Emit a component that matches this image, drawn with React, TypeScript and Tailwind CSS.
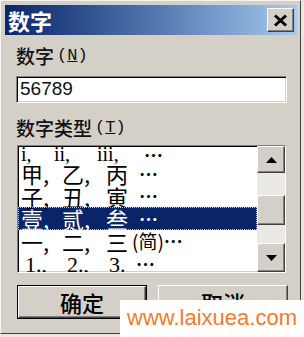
import React from "react";

const cjk = "font-['Noto_Sans_CJK_SC',sans-serif]";
const raised =
  "border border-t-white border-l-white border-r-[#404040] border-b-[#404040] shadow-[inset_-1px_-1px_0_#808080] bg-[#d4d0c8]";
const sunken =
  "border border-t-[#808080] border-l-[#808080] border-r-white border-b-white shadow-[inset_1px_1px_0_#000,inset_-1px_-1px_0_#d4d0c8] bg-white";

type Cell = { text: string; w: string; latin?: boolean };
type Row = {
  pad: string;
  height: string;
  latinClass: string;
  cells: Cell[];
  tail: string;
  selected?: boolean;
};

const fullLatin = "relative top-[2px] text-[22px] leading-[22px]";

const rows: Row[] = [
  {
    pad: "pl-[3px]",
    height: "h-[15px]",
    latinClass: "text-[20px] leading-[15px]",
    cells: [
      { text: "i,", w: "w-[33px]", latin: true },
      { text: "ii,", w: "w-[43px]", latin: true },
      { text: "iii,", w: "w-[47px]", latin: true },
    ],
    tail: "",
  },
  {
    pad: "pl-[3px]",
    height: "h-[22.5px]",
    latinClass: fullLatin,
    cells: [
      { text: "甲,", w: "w-[41px]" },
      { text: "乙,", w: "w-[44px]" },
      { text: "丙", w: "w-[33px]" },
    ],
    tail: "",
  },
  {
    pad: "pl-[3px]",
    height: "h-[22.5px]",
    latinClass: fullLatin,
    cells: [
      { text: "子,", w: "w-[41px]" },
      { text: "丑,", w: "w-[44px]" },
      { text: "寅", w: "w-[33px]" },
    ],
    tail: "",
  },
  {
    pad: "pl-[3px]",
    height: "h-[22.5px]",
    latinClass: fullLatin,
    cells: [
      { text: "壹,", w: "w-[41px]" },
      { text: "贰,", w: "w-[44px]" },
      { text: "叁", w: "w-[33px]" },
    ],
    tail: "",
    selected: true,
  },
  {
    pad: "pl-[3px]",
    height: "h-[22.5px]",
    latinClass: fullLatin,
    cells: [
      { text: "一,", w: "w-[41px]" },
      { text: "二,", w: "w-[44px]" },
      { text: "三", w: "w-[26px]" },
    ],
    tail: "(简)",
  },
  {
    pad: "pl-[7px]",
    height: "h-[22.5px]",
    latinClass: fullLatin,
    cells: [
      { text: "1.,", w: "w-[42px]", latin: true },
      { text: "2.,", w: "w-[42px]", latin: true },
      { text: "3.", w: "w-[27px]", latin: true },
    ],
    tail: "",
  },
];

function ListRow({ row }: { row: Row }) {
  return (
    <div
      className={`flex ${row.height} items-center whitespace-nowrap ${row.pad} ${
        row.selected
          ? "bg-[#0a246a] text-white outline outline-1 outline-dotted outline-offset-[-1px] outline-[#c9c38a]"
          : "text-black"
      }`}
    >
      {row.cells.map((cell) => (
        <span
          key={cell.text}
          className={`${cell.w} shrink-0 ${
            cell.latin
              ? `font-['Liberation_Serif',serif] ${row.latinClass}`
              : `${cjk} text-[22px] leading-[22px]`
          }`}
        >
          {cell.text}
        </span>
      ))}
      {row.tail ? (
        <span className={`${cjk} text-[19px] leading-[22px]`}>{row.tail}</span>
      ) : null}
      <span className={`${cjk} text-[19px] font-bold leading-[15px]`}>…</span>
    </div>
  );
}

function Arrow({ up }: { up?: boolean }) {
  return (
    <svg width="11" height="6" viewBox="0 0 11 6">
      {up ? (
        <polygon points="5.5,0 11,6 0,6" fill="#000" />
      ) : (
        <polygon points="0,0 11,0 5.5,6" fill="#000" />
      )}
    </svg>
  );
}

export default function App() {
  return (
    <div className="relative h-[337px] w-[304px] overflow-hidden bg-[#e9e7e3]">
      <div className="h-[334px] w-[301px] border-l border-t border-r border-b border-l-[#f4f3f0] border-t-[#f4f3f0] border-r-[#404040] border-b-[#404040] bg-[#d4d0c8] pl-[4px] pt-[4px]">
        <div className="flex h-[30px] w-[292px] items-center justify-between bg-gradient-to-r from-[#0a246a] to-[#a6caf0] pl-[3px] pr-[3px]">
          <span className={`${cjk} text-[22px] font-bold leading-[30px] text-white`}>
            数字
          </span>
          <button
            className={`flex h-[24px] w-[27px] items-center justify-center ${raised}`}
          >
            <svg width="15" height="13" viewBox="0 0 15 13">
              <path d="M2 1.5 L13 11.5 M13 1.5 L2 11.5" stroke="#000" strokeWidth="3" />
            </svg>
          </button>
        </div>

        <div className="pl-[11px]">
          <div className="mt-[9px] flex h-[24px] items-center leading-[24px] text-[#111]">
            <span className={`${cjk} text-[19px] font-medium`}>数字</span>
            <span className="ml-[3px] font-['Liberation_Mono',monospace] text-[17px]">
              (<span className="underline">N</span>)
            </span>
          </div>

          <div className={`mt-[8px] flex h-[27px] w-[271px] items-center pl-[3px] ${sunken}`}>
            <span className="font-['Liberation_Sans',sans-serif] text-[19px] text-[#111]">
              56789
            </span>
          </div>

          <div className="mt-[13px] flex h-[24px] items-center leading-[24px] text-[#111]">
            <span className={`${cjk} text-[19px] font-medium`}>数字类型</span>
            <span className="ml-[3px] font-['Liberation_Mono',monospace] text-[17px]">
              (<span className="underline">T</span>)
            </span>
          </div>

          <div className={`ml-[1px] mt-[5px] flex h-[128px] w-[269px] ${sunken}`}>
            <div className="flex-1 overflow-hidden pt-px">
              {rows.map((row, i) => (
                <ListRow key={i} row={row} />
              ))}
            </div>
            <div className="flex w-[28px] flex-col bg-[#ebe9e4]">
              <div className={`flex h-[27px] items-center justify-center ${raised}`}>
                <Arrow up />
              </div>
              <div className="h-[22px]" />
              <div className={`h-[30px] ${raised}`} />
              <div className="h-[18px]" />
              <div className={`flex h-[29px] items-center justify-center ${raised}`}>
                <Arrow />
              </div>
            </div>
          </div>

          <div className="ml-[1px] mt-[12px] flex gap-[11px]">
            <div className="h-[34px] w-[130px] border border-black">
              <button
                className={`flex h-full w-full items-center justify-center ${raised}`}
              >
                <span className={`${cjk} text-[22px] font-medium leading-[24px] text-black`}>
                  确定
                </span>
              </button>
            </div>
            <button
              className={`flex h-[33px] w-[130px] items-center justify-center ${raised}`}
            >
              <span className={`${cjk} text-[22px] font-medium leading-[24px] text-black`}>
                取消
              </span>
            </button>
          </div>
        </div>
      </div>

      <div className="absolute left-[120px] top-[300px] h-[37px] w-[184px] bg-white pl-[7px] pt-[3px]">
        <span className="font-['Liberation_Sans',sans-serif] text-[22px] leading-[30px] text-[#f27a2c]">
          www.laixuea.com
        </span>
      </div>
    </div>
  );
}
